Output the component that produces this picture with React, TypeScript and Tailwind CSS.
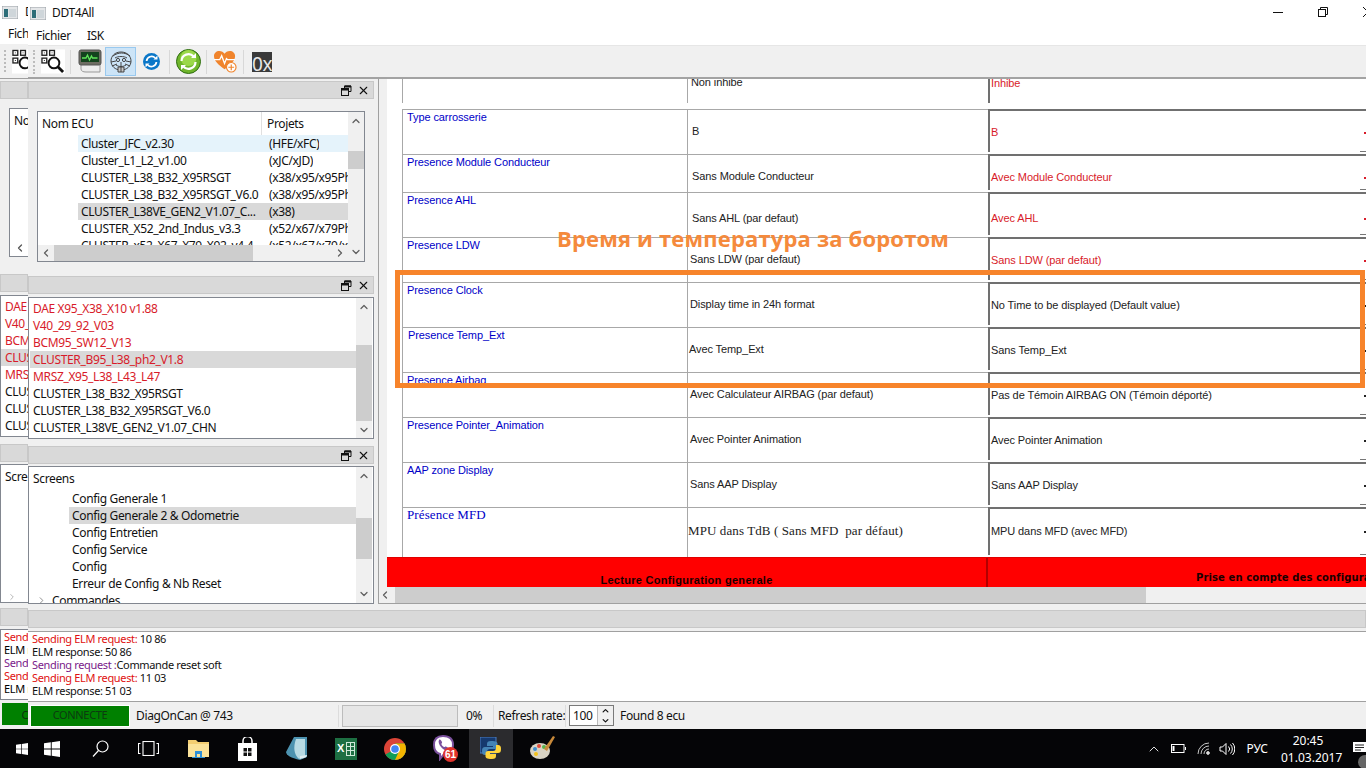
import { ChevronDown, ChevronLeft, ChevronRight, ChevronUp, X } from 'lucide-react';

const UI = "font-['Noto_Sans',sans-serif] tracking-[-0.35px]";
const TBL = "font-['Liberation_Sans',sans-serif] tracking-[-0.1px]";
const SERIF = "font-['Liberation_Serif',serif] text-[13px] tracking-[0.1px]";

type Row = {
  h: string;
  label: string;
  labelCls: string;
  mid: string;
  midCls: string;
  right: string;
  rightCls: string;
  red?: boolean;
  serif?: boolean;
};

const ROWS: Row[] = [
  { h: 'h-[45px]', label: 'Type carrosserie', labelCls: 'pl-[4px]', mid: 'B', midCls: 'pl-[4px] pt-[14px]', right: 'B', rightCls: 'pt-[14px]', red: true },
  { h: 'h-[38px]', label: 'Presence Module Conducteur', labelCls: 'pl-[4px]', mid: 'Sans Module Conducteur', midCls: 'pl-[4px] pt-[14px]', right: 'Avec Module Conducteur', rightCls: 'pt-[14px]', red: true },
  { h: 'h-[45px]', label: 'Presence AHL', labelCls: 'pl-[4px]', mid: 'Sans AHL (par defaut)', midCls: 'pl-[4px] pt-[18px]', right: 'Avec AHL', rightCls: 'pt-[17px]', red: true },
  { h: 'h-[45px]', label: 'Presence LDW', labelCls: 'pl-[4px]', mid: 'Sans LDW (par defaut)', midCls: 'pl-[2px] pt-[14px]', right: 'Sans LDW (par defaut)', rightCls: 'pt-[14px]', red: true },
  { h: 'h-[45px]', label: 'Presence Clock', labelCls: 'pl-[4px]', mid: 'Display time in 24h format', midCls: 'pl-[2px] pt-[14px]', right: 'No Time to be displayed (Default value)', rightCls: 'pt-[14px]' },
  { h: 'h-[45px]', label: 'Presence Temp_Ext', labelCls: 'pl-[5px]', mid: 'Avec Temp_Ext', midCls: 'pl-[1px] pt-[14px]', right: 'Sans Temp_Ext', rightCls: 'pt-[14px]' },
  { h: 'h-[45px]', label: 'Presence Airbag', labelCls: 'pl-[4px]', mid: 'Avec Calculateur AIRBAG (par defaut)', midCls: 'pl-[2px] pt-[14px]', right: 'Pas de Témoin AIRBAG ON (Témoin déporté)', rightCls: 'pt-[14px]' },
  { h: 'h-[45px]', label: 'Presence Pointer_Animation', labelCls: 'pl-[4px]', mid: 'Avec Pointer Animation', midCls: 'pl-[2px] pt-[14px]', right: 'Avec Pointer Animation', rightCls: 'pt-[14px]' },
  { h: 'h-[45px]', label: 'AAP zone Display', labelCls: 'pl-[4px]', mid: 'Sans AAP Display', midCls: 'pl-[2px] pt-[14px]', right: 'Sans AAP Display', rightCls: 'pt-[14px]' },
  { h: 'h-[50px]', label: 'Présence MFD', labelCls: 'pl-[4px]', mid: 'MPU dans TdB ( Sans MFD  par défaut)', midCls: 'pl-0 pt-[16px]', right: 'MPU dans MFD (avec MFD)', rightCls: 'pt-[15px]', serif: true },
];

const ECUS = [
  { name: 'Cluster_JFC_v2.30', proj: '(HFE/xFC)', bg: 'bg-[#e5f3fb]' },
  { name: 'Cluster_L1_L2_v1.00', proj: '(xJC/xJD)', bg: '' },
  { name: 'CLUSTER_L38_B32_X95RSGT', proj: '(x38/x95/x95Ph2)', bg: '' },
  { name: 'CLUSTER_L38_B32_X95RSGT_V6.0', proj: '(x38/x95/x95Ph2)', bg: '' },
  { name: 'CLUSTER_L38VE_GEN2_V1.07_C...', proj: '(x38)', bg: 'bg-[#d9d9d9]' },
  { name: 'CLUSTER_X52_2nd_Indus_v3.3', proj: '(x52/x67/x79Ph2)', bg: '' },
  { name: 'CLUSTER_x52_X67_X79_X92_v4.4', proj: '(x52/x67/x79/x92)', bg: '' },
];

const FOUND = [
  { name: 'DAE X95_X38_X10 v1.88', red: true },
  { name: 'V40_29_92_V03', red: true },
  { name: 'BCM95_SW12_V13', red: true },
  { name: 'CLUSTER_B95_L38_ph2_V1.8', red: true, sel: true },
  { name: 'MRSZ_X95_L38_L43_L47', red: true },
  { name: 'CLUSTER_L38_B32_X95RSGT' },
  { name: 'CLUSTER_L38_B32_X95RSGT_V6.0' },
  { name: 'CLUSTER_L38VE_GEN2_V1.07_CHN' },
];

const SCREENS = ['Config Generale 1', 'Config Generale 2 & Odometrie', 'Config Entretien', 'Config Service', 'Config', 'Erreur de Config & Nb Reset'];

function FloatIcon() {
  return (
    <svg width="11" height="11" viewBox="0 0 11 11" fill="none" stroke="#111" strokeWidth="1">
      <path d="M3.5 3V1h6.5v5.5H8" />
      <path d="M3.5 1.5h6.5" strokeWidth="2" />
      <rect x="0.5" y="3.5" width="7" height="7" />
      <path d="M0.5 4.5h7" strokeWidth="2" />
    </svg>
  );
}

function DockTitle({ back }: { back?: boolean }) {
  return (
    <div className={`h-[18px] bg-[#d9d9d9] border border-[#c8c8c8] flex items-center justify-end gap-[5px] pr-[3px] ${back ? '' : 'w-[346px]'}`}>
      {!back && (
        <>
          <FloatIcon />
          <X size={13} strokeWidth={2} className="text-[#111]" />
        </>
      )}
    </div>
  );
}

function VScroll({ top, thumb, w = 'w-[16px]' }: { top: string; thumb: string; w?: string }) {
  return (
    <div className={`${w} shrink-0 bg-[#f0f0f0] flex flex-col items-center`}>
      <ChevronUp size={12} strokeWidth={2.5} className="text-[#606060] my-[3px] shrink-0" />
      <div className={`${top} shrink-0`} />
      <div className={`${thumb} w-full bg-[#cdcdcd] shrink-0`} />
      <div className="flex-1" />
      <ChevronDown size={12} strokeWidth={2.5} className="text-[#606060] my-[3px] shrink-0" />
    </div>
  );
}

function QrSearch() {
  return (
    <svg width="24" height="25" viewBox="0 0 25 25">
      <rect width="25" height="25" fill="#fff" />
      <g fill="none" stroke="#222" strokeWidth="1.4">
        <rect x="1" y="1" width="5" height="5" />
        <rect x="9" y="1" width="5" height="5" />
        <rect x="1" y="9" width="5" height="5" />
      </g>
      <path d="M3 3h1v1H3zM11 3h1v1h-1zM3 11h1v1H3z" fill="#222" />
      <circle cx="13.5" cy="14" r="5.6" fill="#fff" stroke="#111" strokeWidth="2" />
      <path d="M17.5 18l5.5 5.5" stroke="#111" strokeWidth="3" />
    </svg>
  );
}

function MonitorIcon() {
  return (
    <svg width="24" height="25" viewBox="0 0 24 25">
      <path d="M3 6h19v17H8c-3 0-5-1-5-3z" fill="#ececec" stroke="#999" />
      <rect x="1" y="1" width="22" height="15" rx="2" fill="#6d6d62" stroke="#555" />
      <rect x="3" y="3" width="18" height="10" fill="#14431e" />
      <path d="M4 9h4l1.5-3 2 5 2-4 1 2h5" fill="none" stroke="#5fe45a" strokeWidth="1.3" />
    </svg>
  );
}

function FaceIcon() {
  return (
    <svg width="24" height="24" viewBox="0 0 24 24" fill="none" stroke="#444" strokeWidth="1">
      <path d="M12 2c6 0 10 4 10 9s-4 9-10 9S2 16 2 11 6 2 12 2z" />
      <path d="M4 6c5-4 12-4 17 0M2 12l5-1M22 12l-5-1M3 16l5-2M21 16l-5-2M6 8c3-2 9-2 12 0" />
      <circle cx="9" cy="10" r="1.6" />
      <circle cx="15" cy="10" r="1.6" />
      <path d="M12 12v5M7 15c3 2 7 2 10 0" />
      <path d="M9 17h6v5H9z" fill="#c8c8c8" />
      <path d="M12 17v5" />
    </svg>
  );
}

function BlueRefresh() {
  return (
    <svg width="17" height="17" viewBox="0 0 17 17">
      <circle cx="8.5" cy="8.5" r="8.5" fill="#0b77c8" />
      <g fill="none" stroke="#fff" strokeWidth="1.8">
        <path d="M3.6 8a5 5 0 0 1 8.6-3" />
        <path d="M13.4 9a5 5 0 0 1-8.6 3" />
      </g>
      <path d="M10.5 6.5h4v-4zM6.5 10.5h-4v4z" fill="#fff" />
    </svg>
  );
}

function GreenRefresh() {
  return (
    <svg width="25" height="25" viewBox="0 0 25 25">
      <circle cx="12.5" cy="12.5" r="12" fill="#6fb52b" stroke="#2f6d12" />
      <circle cx="12.5" cy="9" r="8" fill="#9bd84a" />
      <g fill="none" stroke="#fff" strokeWidth="2.2">
        <path d="M5.5 12a7 7 0 0 1 12.2-4.5" />
        <path d="M19.5 13a7 7 0 0 1-12.2 4.5" />
      </g>
      <path d="M15 9h5V4zM10 16H5v5z" fill="#fff" />
    </svg>
  );
}

function HeartIcon() {
  return (
    <svg width="23" height="23" viewBox="0 0 24 24">
      <path d="M11 20C4 15 0 11 0 6.5 0 3 2.500 1 5.500 1 8 1 10 2.200 11 4c1-1.800 3-3 5.500-3C19.500 1 22 3 22 6.500 22 11 18 15 11 20z" fill="#f0842c" />
      <path d="M0 10h6l2-4 3 8 2-5 1 1h8" fill="none" stroke="#fff" strokeWidth="1.4" />
      <circle cx="18" cy="18" r="5" fill="#fff" stroke="#f0842c" strokeWidth="1.2" />
      <path d="M18 15v6M15 18h6" stroke="#f0842c" strokeWidth="1.2" />
    </svg>
  );
}

function WinLogo({ size = 16 }: { size?: number }) {
  return (
    <svg width={size} height={size} viewBox="0 0 16 16" fill="#fff">
      <path d="M0 2.300 6.800 1.300V7.500H0zM7.700 1.200 16 0V7.500H7.700zM0 8.400H6.800V14.700L0 13.700zM7.700 8.400H16V16L7.700 14.800z" />
    </svg>
  );
}

function Taskbar() {
  return (
    <div className="h-[39px] shrink-0 bg-[#050507] flex items-center text-white relative overflow-hidden">
      <div className="w-[16px]" />
      <WinLogo size={12} />
      <div className="w-[16px]" />
      <WinLogo />
      <div className="w-[32px]" />
      <svg width="17" height="17" viewBox="0 0 17 17" fill="none" stroke="#fff" strokeWidth="1.2">
        <circle cx="10.500" cy="6.500" r="5.500" />
        <path d="M6.500 10.500 1 16.500" />
      </svg>
      <div className="w-[29px]" />
      <svg width="21" height="15" viewBox="0 0 21 15" fill="none" stroke="#fff" strokeWidth="1.1">
        <rect x="5" y="0.500" width="11" height="14" />
        <path d="M2.500 2.500H.5v10h2M18.500 2.500h2v10h-2" />
      </svg>
      <div className="w-[29px]" />
      <svg width="21" height="19" viewBox="0 0 21 19">
        <path d="M0 1h8l2 2h11v15H0z" fill="#f3ce72" />
        <path d="M0 5h21v13H0z" fill="#fbe39a" />
        <path d="M7 12h7v6h-2v-3H9v3H7z" fill="#2f8fd6" />
        <path d="M4 18h13v1H4z" fill="#2f8fd6" />
      </svg>
      <div className="w-[28px]" />
      <svg width="21" height="24" viewBox="0 0 21 24">
        <path d="M1 6h19v18H1z" fill="#fff" />
        <path d="M6 7V4a4.500 4.500 0 0 1 9 0v3" fill="none" stroke="#fff" strokeWidth="1.500" />
        <path d="M6.500 11h3.500v3.500H6.500zM11 11h3.500v3.500H11zM6.500 15.500h3.500V19H6.500zM11 15.500h3.500V19H11z" fill="#111" />
      </svg>
      <div className="w-[28px]" />
      <svg width="21" height="23" viewBox="0 0 21 23">
        <path d="M8 0h13v20L14 23C5 21 0 18 0 15z" fill="#4d93b0" />
        <path d="M10 2h9v17l-6 3C8 18 7 10 10 2z" fill="#b8dbe4" />
        <path d="M14 22c5-1 7-2 7-4l-7 1z" fill="#dfeef2" />
      </svg>
      <div className="w-[28px]" />
      <div className="w-[22px] h-[22px] bg-[#1d6f42] flex items-center gap-[2px] pl-[2px]">
        <span className="text-[11px] leading-none font-bold font-['Liberation_Sans',sans-serif]">X</span>
        <svg width="9" height="14" viewBox="0 0 9 14" fill="none" stroke="#cfe8d8">
          <rect x="0.500" y="0.500" width="8" height="13" />
          <path d="M0 4.500h9M0 8.500h9M4.500 0v14" />
        </svg>
      </div>
      <div className="w-[27px]" />
      <svg width="22" height="22" viewBox="0 0 22 22">
        <circle cx="11" cy="11" r="11" fill="#db4437" />
        <path d="M11 11 1.500 16.500A11 11 0 0 0 11 22a11 11 0 0 0 9.500-16.500H11z" fill="#0f9d58" />
        <path d="M11 5.500h9.500A11 11 0 0 1 11 22l5-11z" fill="#f4b400" />
        <circle cx="11" cy="11" r="5" fill="#fff" />
        <circle cx="11" cy="11" r="3.800" fill="#4285f4" />
      </svg>
      <div className="w-[27px]" />
      <div className="relative w-[25px] h-[28px]">
        <svg width="21" height="26" viewBox="0 0 21 26">
          <path d="M10 1c6 0 10 3 10 9 0 6-3 9-9 9l-4 5v-5C3 18 1 15 1 10 1 4 4 1 10 1z" fill="#fff" stroke="#7b519d" strokeWidth="2" />
          <path d="M6 5c1-1 2 0 3 2 .5 1-1 1.500-.5 2.500s1.500 2 2.500 2.500c1 .5 1-1 2-.5 2 1 3 2 2 3-2 2-5 0-7-2.500S5 7 6 5z" fill="#7b519d" />
        </svg>
        <span className="absolute right-0 bottom-[1px] w-[15px] h-[15px] rounded-full bg-[#e0332c] text-[10px] leading-[15px] text-center font-bold font-['Liberation_Sans',sans-serif]">61</span>
      </div>
      <div className="w-[11px]" />
      <div className="w-[44px] h-full bg-[#2b2b2e] flex items-center justify-center">
        <svg width="22" height="24" viewBox="0 0 22 24">
          <rect x="0" y="0" width="16" height="16" fill="#16396e" stroke="#4d7fc0" />
          <path d="M11 4c-3 0-4 1-4 3v2h6v1H5c-2 0-3 1-3 4s1 4 3 4h2v-3c0-2 1-3 3-3h5c1.500 0 2.500-1 2.500-2.500V7c0-2-1-3-6.500-3z" fill="#4584b6" />
          <path d="M12 22c3 0 4-1 4-3v-2h-6v-1h8c2 0 3-1 3-4s-1-4-3-4h-2v3c0 2-1 3-3 3H8c-1.500 0-2.500 1-2.500 2.500V19c0 2 1 3 6.500 3z" fill="#ffd43b" />
        </svg>
      </div>
      <div className="w-[17px]" />
      <svg width="25" height="25" viewBox="0 0 25 25">
        <ellipse cx="10" cy="15" rx="10" ry="8" fill="#d9d3c3" />
        <circle cx="5" cy="13" r="2" fill="#3f8fd0" />
        <circle cx="9" cy="10" r="2" fill="#e04b3a" />
        <circle cx="14" cy="11" r="2" fill="#57b24a" />
        <circle cx="6" cy="18" r="2" fill="#f2c21a" />
        <path d="M23 0l2 1-8 14-3-2z" fill="#c98a3a" />
      </svg>
      <div className="flex-1" />
      {/* tray */}
      <ChevronUp size={16} strokeWidth={1.3} className="mr-[9px]" />
      <svg width="15" height="9" viewBox="0 0 15 9" fill="none" stroke="#fff" className="mr-[11px]">
        <rect x="0.500" y="0.500" width="12.500" height="8" />
        <path d="M14.500 3v3" />
        <path d="M2.500 2v5" strokeWidth="2" />
      </svg>
      <svg width="13" height="13" viewBox="0 0 13 13" fill="none" stroke="#ddd" strokeWidth="0.9" className="mr-[9px]">
        <path d="M1 12A11 11 0 0 1 12 1M4 12a8 8 0 0 1 8-8M7 12a5 5 0 0 1 5-5" />
        <circle cx="11" cy="11" r="1.400" fill="#ddd" />
      </svg>
      <svg width="16" height="14" viewBox="0 0 16 14" fill="none" stroke="#fff" className="mr-[11px]">
        <path d="M1 5h2.500L7 1.500v11L3.500 9H1z" />
        <path d="M9.500 4.500a3.500 3.500 0 0 1 0 5M11.500 2.500a6.500 6.500 0 0 1 0 9M13.500 1a9 9 0 0 1 0 12" />
      </svg>
      <span className="font-['Noto_Sans',sans-serif] text-[12px] mr-[13px]">РУС</span>
      <div className="font-['Noto_Sans',sans-serif] text-[12px] leading-[17px] text-center w-[54px] mr-[18px]">
        <div>20:45</div>
        <div>01.03.2017</div>
      </div>
      <svg width="13" height="14" viewBox="0 0 13 14">
        <path d="M0 0h13v10H0z" fill="#fff" />
        <path d="M2 3h9M2 5.500h9M2 8h6" stroke="#222" />
      </svg>
      <div className="absolute -right-[6px] -bottom-[1px] w-[14px] h-[14px] rounded-full bg-[#666]" />
    </div>
  );
}

function BackWindow() {
  const found = ['DAE', 'V40_', 'BCM', 'CLUS', 'MRS', 'CLUS', 'CLUS', 'CLUS'];
  const logs = [
    { t: 'Send', c: 'text-[#e01010]' },
    { t: 'ELM r', c: 'text-black' },
    { t: 'Send', c: 'text-[#7a1a8a]' },
    { t: 'Send', c: 'text-[#e01010]' },
    { t: 'ELM r', c: 'text-black' },
  ];
  return (
    <div className={`w-[28px] shrink-0 overflow-hidden bg-[#f0f0f0] flex flex-col ${UI} text-[12px] text-[#111]`}>
      <div className="h-[44px] bg-white shrink-0 overflow-hidden">
        <div className="h-[24px] flex items-center pl-[2px] gap-[7px]">
          <AppIcon />
          <span>D</span>
        </div>
        <div className="pl-[8px] mt-[1px] leading-[18px] whitespace-nowrap">Fichier</div>
      </div>
      <div className="h-[35px] shrink-0 flex items-center pl-[4px] gap-[6px] overflow-hidden border-b-[1px] border-[#a0a0a0]">
        <div className="w-[2px] h-[22px] shrink-0 border-l-2 border-dotted border-[#bbb]" />
        <div className="shrink-0"><QrSearch /></div>
      </div>
      <div className="mt-[2px] shrink-0"><DockTitle back /></div>
      <div className="ml-[9px] mt-[9px] h-[149px] shrink-0 bg-white border border-r-0 border-[#828790] flex flex-col pl-[4px]">
        <div className="mt-[3px] leading-[18px] whitespace-nowrap">Nom</div>
        <div className="flex-1" />
        <ChevronLeft size={12} strokeWidth={2.500} className="text-[#555] mb-[2px]" />
      </div>
      <div className="mt-[17px] shrink-0"><DockTitle back /></div>
      <div className="mt-[3px] h-[142px] shrink-0 bg-white border border-[#828790] border-r-0 overflow-hidden pt-[2px]">
        {found.map((f, i) => (
          <div key={i} className={`h-[17px] pl-[4px] leading-[17px] whitespace-nowrap ${i < 5 ? 'text-[#d81b2a]' : ''} ${i === 3 ? 'bg-[#d9d9d9]' : ''}`}>{f}</div>
        ))}
      </div>
      <div className="mt-[7px] shrink-0"><DockTitle back /></div>
      <div className="mt-[2px] h-[139px] shrink-0 bg-white border border-[#828790] border-r-0 flex flex-col pl-[4px] overflow-hidden">
        <div className="leading-[24px]">Scre</div>
        <div className="flex-1" />
        <ChevronRight size={10} className="text-[#aaa] ml-[2px]" />
      </div>
      <div className="mt-[5px] shrink-0"><DockTitle back /></div>
      <div className="mt-[3px] h-[71px] shrink-0 bg-white border border-[#828790] border-r-0 pl-[3px] overflow-hidden text-[11px]">
        {logs.map((l, i) => (
          <div key={i} className={`h-[13px] leading-[13px] whitespace-nowrap ${l.c}`}>{l.t}</div>
        ))}
      </div>
      <div className="mt-[3px] ml-[2px] h-[22px] shrink-0 bg-[#008000] flex items-center justify-end text-[#0c2f0c] text-[11px] leading-none">C</div>
    </div>
  );
}

function AppIcon() {
  return (
    <svg width="16" height="13" viewBox="0 0 16 13" className="shrink-0">
      <rect width="16" height="13" fill="#e4e6e8" stroke="#9aa0a6" />
      <rect x="2" y="3" width="4" height="8" fill="#2d6d78" />
      <rect x="7" y="3" width="7" height="8" fill="#cfd6da" />
    </svg>
  );
}

function TopBars() {
  return (
    <div className={`${UI} shrink-0`}>
      <div className="h-[45px] bg-white relative">
        <div className="h-[26px] flex items-center pl-[2px] gap-[6px] text-[12px] text-[#111]">
          <AppIcon />
          <span>DDT4All</span>
          <div className="flex-1" />
          <div className="w-[10px] h-[1px] bg-[#111] mr-[29px] -mt-[2px]" />
          <svg width="10" height="10" viewBox="0 0 10 10" fill="none" stroke="#111" className="mr-[29px] -mt-[2px]">
            <rect x="0.500" y="2.500" width="7" height="7" />
            <path d="M2.500 2.500V.5h7v7h-2" />
          </svg>
          <svg width="3" height="10" viewBox="0 0 3 10" fill="none" stroke="#111" className="-mt-[2px]">
            <path d="M0 0l10 10M0 10L10 0" />
          </svg>
        </div>
        <div className="h-[19px] flex items-center pl-[8px] gap-[16px] text-[12px] text-[#111]">
          <span>Fichier</span>
          <span>ISK</span>
        </div>
      </div>
      <div className="h-[34px] bg-[#f0f0f0] border-t border-[#e6e6e6] border-b-[2px] border-b-[#a3a3a3] flex items-center pl-[5px]">
        <div className="h-[24px] w-[2px] border-l-2 border-dotted border-[#bdbdbd]" />
        <div className="ml-[6px]"><QrSearch /></div>
        <div className="w-px h-[24px] bg-[#d8d8d8] ml-[5px]" />
        <div className="ml-[7px]"><MonitorIcon /></div>
        <div className="ml-[3px] w-[31px] h-[29px] bg-[#cce4f7] border border-[#99c9ef] flex items-center justify-center"><FaceIcon /></div>
        <div className="ml-[7px]"><BlueRefresh /></div>
        <div className="w-px h-[24px] bg-[#d8d8d8] ml-[9px]" />
        <div className="ml-[6px]"><GreenRefresh /></div>
        <div className="w-px h-[24px] bg-[#d8d8d8] ml-[5px]" />
        <div className="ml-[7px]"><HeartIcon /></div>
        <div className="w-px h-[24px] bg-[#d8d8d8] ml-[6px]" />
        <div className="ml-[8px] w-[20px] h-[20px] bg-[#3a3a3a] text-[#e8e8e8] text-[19px] leading-[24px] overflow-hidden whitespace-nowrap">0x</div>
      </div>
    </div>
  );
}

function Sidebar() {
  return (
    <div className={`w-[350px] shrink-0 flex flex-col ${UI} text-[12px] text-[#111]`}>
      <div className="mt-[2px]"><DockTitle /></div>
      {/* ecu tree */}
      <div className="ml-[9px] mt-[12px] w-[328px] h-[151px] shrink-0 border border-[#828790] bg-white flex">
        <div className="w-[310px] shrink-0 flex flex-col">
          <div className="h-[23px] shrink-0 flex items-center">
            <div className="w-[224px] pl-[4px] border-r border-[#e0e0e0] h-full flex items-center">Nom ECU</div>
            <div className="pl-[5px]">Projets</div>
          </div>
          <div className="h-[110px] shrink-0 overflow-hidden">
            {ECUS.map((e) => (
              <div key={e.name} className={`ml-[40px] h-[17px] flex leading-[17px] whitespace-nowrap ${e.bg}`}>
                <div className="w-[191px] pl-[3px] shrink-0 overflow-hidden">{e.name}</div>
                <div className="overflow-hidden">{e.proj}</div>
              </div>
            ))}
          </div>
          <div className="h-[16px] shrink-0 bg-[#f0f0f0] flex items-center">
            <ChevronLeft size={12} strokeWidth={2.500} className="text-[#606060] mx-[2px] shrink-0" />
            <div className="w-[199px] h-full bg-[#cdcdcd]" />
            <div className="flex-1" />
            <ChevronRight size={12} strokeWidth={2.500} className="text-[#606060] mx-[2px] shrink-0" />
          </div>
        </div>
        <VScroll top="h-[21px]" thumb="h-[18px]" />
      </div>
      <div className="mt-[14px]"><DockTitle /></div>
      {/* found ecus */}
      <div className="mt-[3px] w-[346px] h-[142px] shrink-0 border border-[#828790] bg-white flex">
        <div className="flex-1 pl-[1px] pt-[2px] overflow-hidden">
          {FOUND.map((f) => (
            <div key={f.name} className={`h-[17px] leading-[17px] pl-[3px] whitespace-nowrap ${f.red ? 'text-[#d81b2a]' : ''} ${f.sel ? 'bg-[#d9d9d9]' : ''}`}>{f.name}</div>
          ))}
        </div>
        <VScroll top="h-[29px]" thumb="h-[76px]" w="w-[16px] mr-[1px]" />
      </div>
      <div className="mt-[7px]"><DockTitle /></div>
      {/* screens */}
      <div className="mt-[2px] w-[346px] h-[138px] shrink-0 border border-[#828790] bg-white flex">
        <div className="flex-1 overflow-hidden pt-[3px]">
          <div className="h-[17px] leading-[17px] pl-[4px]">Screens</div>
          <div className="h-[3px]" />
          {SCREENS.map((s, i) => (
            <div key={s} className={`h-[17px] leading-[17px] ml-[40px] pl-[3px] whitespace-nowrap ${i === 1 ? 'bg-[#d9d9d9]' : ''}`}>{s}</div>
          ))}
          <div className="h-[17px] leading-[17px] pl-[7px] flex items-center gap-[5px] whitespace-nowrap">
            <ChevronRight size={11} className="text-[#888]" />
            <span>Commandes</span>
          </div>
        </div>
        <VScroll top="h-[33px]" thumb="h-[41px]" w="w-[16px] mr-[1px]" />
      </div>
    </div>
  );
}

function ConfigTable() {
  return (
    <div className="flex-1 min-w-0 flex flex-col border-l border-[#a0a0a0]">
      <div className={`h-[508px] overflow-hidden bg-[#f0f0f0] pl-[8px] ${TBL} text-[11px] leading-[14px]`}>
        <div className="bg-white h-full flex flex-col w-[1000px]">
          {/* row clipped by the top of the viewport */}
          <div className="h-[30px] shrink-0 flex">
            <div className="w-[15px] shrink-0" />
            <div className="w-[285px] h-[24px] border-l border-[#a8a8a8]" />
            <div className="w-[301px] h-[28px] border-l border-[#a8a8a8] pl-[3px] -mt-[4px] text-[#222]">Non inhibe</div>
            <div className="flex-1 h-[27px] border-l-2 border-[#707070] pl-[1px] -mt-[3px] text-[#d81b2a]">Inhibe</div>
          </div>
          {ROWS.map((r) => (
            <div key={r.label} className={`${r.h} shrink-0 flex`}>
              <div className="w-[15px] shrink-0" />
              <div className={`w-[285px] shrink-0 border-l border-t border-[#a8a8a8] text-[#0000c8] ${r.labelCls} ${r.serif ? SERIF : ''}`}>{r.label}</div>
              <div className={`w-[301px] shrink-0 border-l border-t border-[#a8a8a8] text-[#222] whitespace-pre ${r.midCls} ${r.serif ? SERIF : ''}`}>{r.mid}</div>
              <div className="w-[380px] shrink-0 flex flex-col">
                <div className="flex-1 border-l-2 border-t-2 border-[#707070] mb-[2px] pl-[1px] flex flex-col">
                  <div className={`flex justify-between ${r.rightCls} ${r.red ? 'text-[#d81b2a]' : 'text-[#222]'}`}>
                    <span className="whitespace-nowrap">{r.right}</span>
                    <span className="w-[3px] h-[2px] mt-[7px] mr-[1px] bg-current" />
                  </div>
                  <div className="flex-1" />
                  <div className="self-end w-[8px] h-px bg-[#777]" />
                </div>
              </div>
            </div>
          ))}
          <div className="h-[30px] shrink-0 bg-[#ff0000] flex overflow-hidden border-t border-[#e00000]">
            <div className="w-[601px] shrink-0 border-r-2 border-[#b30000] text-center pt-[15px] font-bold text-[#1a0000] tracking-[0.3px] leading-[14px]">Lecture Configuration generale</div>
            <div className="pl-[208px] pt-[13px] font-bold text-[#1a0000] whitespace-nowrap font-['DejaVu_Sans',sans-serif] text-[10px] tracking-[0.1px]">Prise en compte des configurations</div>
          </div>
        </div>
      </div>
      <div className="h-[17px] bg-[#f0f0f0] flex items-center shrink-0 border-b border-[#a0a0a0]">
        <ChevronLeft size={12} strokeWidth={2.500} className="text-[#606060] mr-[4px] shrink-0" />
        <div className="w-[751px] h-full bg-[#cdcdcd]" />
      </div>
    </div>
  );
}

function LogAndStatus() {
  return (
    <div className={`${UI} text-[#111] shrink-0`}>
      <div className="h-[18px] mt-[6px] bg-[#d9d9d9] border border-[#c8c8c8]" />
      <div className="mt-[3px] h-[71px] bg-white border-y border-[#a0a0a0] pl-[4px] text-[11px] leading-[13px]">
        <div><span className="text-[#e01010]">Sending ELM request:</span> 10 86</div>
        <div>ELM response:  50 86</div>
        <div><span className="text-[#7a1a8a]">Sending request :</span>Commande reset soft</div>
        <div><span className="text-[#e01010]">Sending ELM request:</span> 11 03</div>
        <div>ELM response:  51 03</div>
      </div>
      <div className="h-[27px] bg-[#f0f0f0] flex items-center text-[12px]">
        <div className="ml-[2px] w-[100px] h-[22px] bg-[#008000] border border-white flex items-center justify-center text-[#0c3a10] text-[11px]">CONNECTE</div>
        <span className="ml-[6px] w-[202px] whitespace-nowrap">DiagOnCan @ 743</span>
        <div className="w-px h-[22px] bg-[#dcdcdc]" />
        <div className="ml-[3px] w-[116px] h-[22px] bg-[#e6e6e6] border border-[#bcbcbc]" />
        <span className="ml-[8px] w-[27px]">0%</span>
        <div className="w-px h-[22px] bg-[#dcdcdc]" />
        <span className="ml-[4px] w-[67px] whitespace-nowrap">Refresh rate:</span>
        <div className="w-px h-[22px] bg-[#dcdcdc]" />
        <div className="ml-[3px] w-[45px] h-[21px] bg-white border border-[#7a7a7a] flex items-center pl-[3px]">
          <span className="flex-1">100</span>
          <div className="w-[16px] h-full flex flex-col bg-[#f0f0f0] border-l border-[#bbb]">
            <ChevronUp size={9} strokeWidth={3} className="flex-1 w-full" />
            <ChevronDown size={9} strokeWidth={3} className="flex-1 w-full" />
          </div>
        </div>
        <span className="ml-[6px] whitespace-nowrap">Found 8 ecu</span>
      </div>
    </div>
  );
}

export default function App() {
  return (
    <div className="relative w-[1366px] h-[768px] overflow-hidden bg-[#f0f0f0] flex flex-col">
      <div className="flex h-[729px] shrink-0">
        <BackWindow />
        <div className="flex-1 min-w-0 flex flex-col">
          <TopBars />
          <div className="h-[525px] shrink-0 flex">
            <Sidebar />
            <ConfigTable />
          </div>
          <LogAndStatus />
        </div>
      </div>
      <Taskbar />
      {/* annotation drawn over the screenshot */}
      <div className="absolute left-[395px] top-[270px] w-[970px] h-[118px] border-[5px] border-[#f7842b]" />
      <div className="absolute left-[557px] top-[224px] text-[#f58a3c] text-[22px] leading-[28px] font-bold font-['Open_Sans',sans-serif] tracking-[0.17px] whitespace-nowrap">Время и температура за боротом</div>
    </div>
  );
}
